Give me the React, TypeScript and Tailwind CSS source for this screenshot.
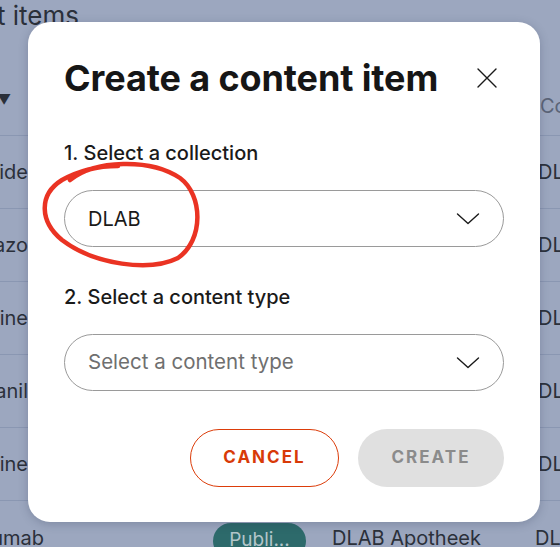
import React from 'react';

const rows = ['Tolnide', 'Omeprazo', 'Fluoxerine', 'Enalanil', 'Fluoxine'];

function Chevron() {
  return (
    <svg width="24" height="14" viewBox="0 0 24 14" fill="none" className="shrink-0">
      <path d="M1.5 2 L12 11.5 L22.5 2" stroke="#1a1a1a" strokeWidth="1.4" strokeLinecap="round" strokeLinejoin="round" />
    </svg>
  );
}

function SelectBox({ value, placeholder }: { value?: string; placeholder: string }) {
  return (
    <div className="h-[57px] w-full rounded-full border border-[#9a9a9a] bg-white flex items-center justify-between pl-[23px] pr-[23px]">
      <span className={value ? 'text-[20px] text-[#1a1a1a]' : 'text-[20.5px] text-[#6f6f6f]'}>
        {value ?? placeholder}
      </span>
      <Chevron />
    </div>
  );
}

export default function App() {
  return (
    <div className="relative h-[547px] w-[560px] overflow-hidden bg-[#9ca7bf] font-['Inter',sans-serif]">
      {/* page behind the dialog */}
      <div className="flex flex-col text-[#2b303a]">
        <div className="h-[56px] -mt-[4px] -ml-[3px] text-[26px] leading-[40px] whitespace-nowrap">t items</div>
        <div className="h-[84px] flex items-center justify-between border-b border-[#8a97b2]">
          <span className="text-[14px] -ml-[3px] mt-[12px]">▼</span>
          <span className="text-[20px] text-[#5b6477] w-[20px] overflow-hidden whitespace-nowrap mt-[24px]">Col</span>
        </div>
        {rows.map((r) => (
          <div key={r} className="h-[73px] flex items-center justify-between border-b border-[#8a97b2] text-[20px]">
            <div className="w-[28px] overflow-hidden flex justify-end whitespace-nowrap">{r}</div>
            <div className="w-[22px] overflow-hidden whitespace-nowrap">DLAB</div>
          </div>
        ))}
        <div className="h-[73px] flex items-start pt-[22px] text-[20px] whitespace-nowrap">
          <div className="w-[44px] overflow-hidden flex justify-end">Trastuzumab</div>
          <div className="ml-[169px] h-[36px] w-[93px] rounded-full bg-[#2d6a6b] text-[#b3c6ca] flex items-start justify-center pt-[3px] text-[19px]">
            Publi...
          </div>
          <div className="ml-[26px] w-[203px] overflow-hidden">DLAB Apotheek</div>
          <div className="w-[25px] overflow-hidden">DLAB</div>
        </div>
      </div>

      {/* dialog */}
      <div className="absolute left-[28px] top-[22px] w-[512px] h-[500px] rounded-[22px] bg-white shadow-[0_2px_10px_rgba(40,50,80,0.25)] px-[36px] pt-[34px]">
        <div className="flex items-center justify-between h-[44px]">
          <h1 className="text-[36px] font-bold text-[#161616] tracking-[-0.1px] leading-[44px]">Create a content item</h1>
          <button className="mr-[7px]">
            <svg width="20" height="20" viewBox="0 0 20 20" fill="none">
              <path d="M1 1 L19 19 M19 1 L1 19" stroke="#1a1a1a" strokeWidth="1.4" strokeLinecap="round" />
            </svg>
          </button>
        </div>

        <div className="mt-[39px] text-[20px] font-medium text-[#1a1a1a] leading-[28px]">1. Select a collection</div>
        <div className="mt-[23px]">
          <SelectBox value="DLAB" placeholder="Select a collection" />
        </div>

        <div className="mt-[36px] text-[20px] font-medium text-[#1a1a1a] leading-[28px]">2. Select a content type</div>
        <div className="mt-[23px]">
          <SelectBox placeholder="Select a content type" />
        </div>

        <div className="mt-[38px] flex justify-end gap-[19px]">
          <button className="h-[58px] w-[149px] rounded-full border-[1.5px] border-[#dc3d0a] text-[#d83a08] text-[17px] font-bold tracking-[0.12em]">
            CANCEL
          </button>
          <button className="h-[58px] w-[146px] rounded-full bg-[#e0e0e0] text-[#8b8b8b] text-[17px] font-bold tracking-[0.12em]">
            CREATE
          </button>
        </div>
      </div>

      {/* red annotation */}
      <svg className="absolute inset-0 pointer-events-none" width="560" height="547" viewBox="0 0 560 547" fill="none">
        <path
          d="M70 180 C 95 160, 150 158, 180 178 C 203 195, 204 240, 178 258 C 150 272, 95 265, 62 240 C 40 222, 38 195, 62 180 C 80 170, 100 166, 118 166"
          stroke="#ea3323"
          strokeWidth="4.5"
          strokeLinecap="round"
          strokeLinejoin="round"
        />
      </svg>
    </div>
  );
}
